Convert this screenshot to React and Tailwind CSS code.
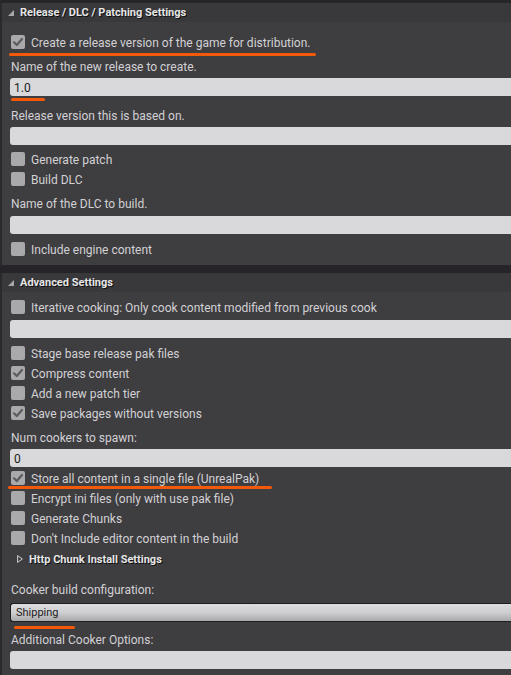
import React from "react";

const font = { fontFamily: "Roboto, 'Noto Sans', sans-serif" };

function Check({ checked }) {
  return (
    <div className="w-[14px] h-[14px] rounded-[2px] bg-[#a9a8ab] flex items-center justify-center shrink-0">
      {checked && (
        <svg width="12" height="12" viewBox="0 0 12 12">
          <path d="M2 6.3 L4.8 9 L10 3" fill="none" stroke="#5b5a5d" strokeWidth="2.2" strokeLinecap="round" strokeLinejoin="round" />
        </svg>
      )}
    </div>
  );
}

function CbRow({ label, checked, className = "", underline }) {
  return (
    <div className={"relative h-[20px] flex items-center pl-[9px] gap-[6px] " + className}>
      <Check checked={checked} />
      <span className="pt-[2px] text-[12px] text-[#d2d1d4] whitespace-nowrap leading-none">{label}</span>
      {underline}
    </div>
  );
}

function Label({ children, className = "" }) {
  return (
    <div className={"h-[20px] flex items-center pl-[9px] pt-[2px] text-[12px] text-[#d2d1d4] whitespace-nowrap leading-none " + className}>
      {children}
    </div>
  );
}

function Input({ value, className = "", underline }) {
  return (
    <div className={"relative h-[18px] ml-[8px] rounded-l-[3px] bg-[#d9d8da] flex items-center pl-[4px] pt-[1px] text-[12px] text-[#1c1c1c] leading-none " + className}>
      {value}
      {underline}
    </div>
  );
}

function Header({ title }) {
  return (
    <div className="h-[19px] bg-[#39383b] flex items-center pl-[6px] gap-[6px]">
      <svg width="6" height="6" viewBox="0 0 6 6">
        <polygon points="6,0 6,6 0,6" fill="#a7a6aa" />
      </svg>
      <span className="text-[11px] font-bold text-[#e6e6e6] leading-none [text-shadow:1px_1px_0_#111]">{title}</span>
    </div>
  );
}

const Orange = ({ cls }) => <div className={"absolute h-[3px] rounded-full bg-[#f25a0a] " + cls} />;

export default function App() {
  return (
    <div style={font} className="w-[511px] h-[675px] overflow-hidden bg-[#262428]">
      <div className="h-[3px] bg-[#262626]" />
      <div className="border-l-2 border-[#2a292c] bg-[#3e3d40] pb-[6px]">
        <Header title="Release / DLC / Patching Settings" />
        <div className="pt-[10px]">
          <CbRow
            label="Create a release version of the game for distribution."
            checked
            underline={<Orange cls="left-[7px] top-[21px] w-[307px]" />}
          />
          <Label className="mt-[4px]">Name of the new release to create.</Label>
          <Input value="1.0" className="mt-[2px]" underline={<Orange cls="left-[1px] top-[20px] w-[34px]" />} />
          <Label className="mt-[9px]">Release version this is based on.</Label>
          <Input className="mt-[2px]" />
          <CbRow label="Generate patch" className="mt-[4px]" />
          <CbRow label="Build DLC" />
          <Label className="mt-[4px]">Name of the DLC to build.</Label>
          <Input className="mt-[3px]" />
          <CbRow label="Include engine content" className="mt-[5px]" />
        </div>
      </div>
      <div className="h-[8px]" />
      <div className="border-l-2 border-[#2a292c] bg-[#3e3d40] h-[402px]">
        <Header title="Advanced Settings" />
        <div className="pt-[5px]">
          <CbRow label="Iterative cooking: Only cook content modified from previous cook" />
          <Input className="mt-[3px]" />
          <CbRow label="Stage base release pak files" className="mt-[5px]" />
          <CbRow label="Compress content" checked />
          <CbRow label="Add a new patch tier" />
          <CbRow label="Save packages without versions" checked />
          <Label className="mt-[4px]">Num cookers to spawn:</Label>
          <Input value="0" className="mt-[2px]" />
          <CbRow
            label="Store all content in a single file (UnrealPak)"
            checked
            className="mt-[1px]"
            underline={<Orange cls="left-[6px] top-[18px] w-[264px]" />}
          />
          <CbRow label="Encrypt ini files (only with use pak file)" />
          <CbRow label="Generate Chunks" />
          <CbRow label="Don't Include editor content in the build" />
          <div className="h-[20px] mt-[1px] flex items-center pl-[15px] gap-[6px]">
            <svg width="6" height="8" viewBox="0 0 6 8">
              <polygon points="0.6,0.6 5.4,4 0.6,7.4" fill="none" stroke="#cfcfd2" strokeWidth="1" />
            </svg>
            <span className="text-[11px] font-bold text-[#e6e6e6] leading-none [text-shadow:1px_1px_0_#111]">Http Chunk Install Settings</span>
          </div>
          <Label className="mt-[10px]">Cooker build configuration:</Label>
          <div className="relative mt-[4px] ml-[8px] h-[19px] rounded-l-[3px] border border-r-0 border-[#1e1d20] bg-gradient-to-b from-[#dcdbdd] via-[#cfced1] to-[#a9a8ab] flex items-center pl-[5px] text-[11px] text-[#1c1c1c] leading-none">
            Shipping
            <Orange cls="left-[3px] top-[22px] w-[61px]" />
          </div>
          <Label className="mt-[7px]">Additional Cooker Options:</Label>
          <Input className="mt-[2px]" />
        </div>
      </div>
    </div>
  );
}
